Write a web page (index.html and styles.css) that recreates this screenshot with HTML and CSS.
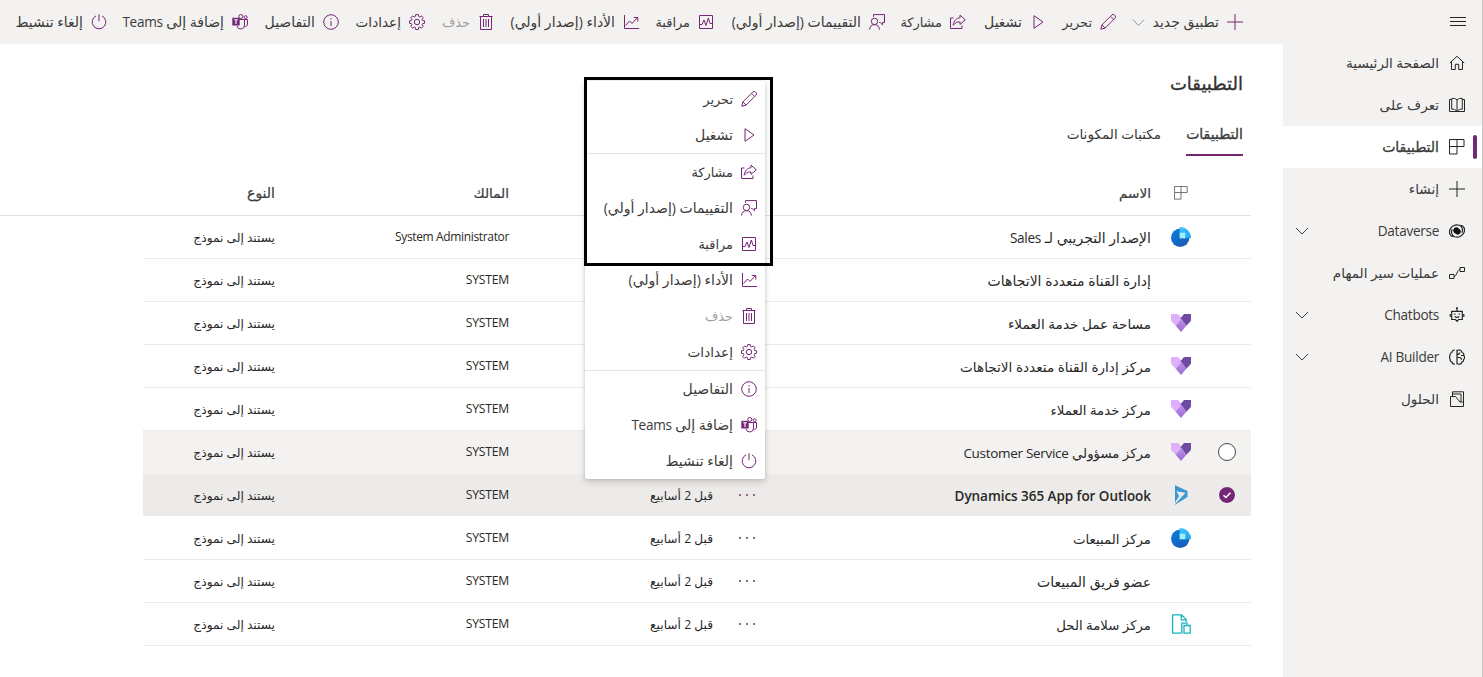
FILE: index.html
```html
<!DOCTYPE html>
<html lang="ar" dir="rtl">
<head>
<meta charset="utf-8">
<title>التطبيقات</title>
<link rel="stylesheet" href="styles.css">
</head>
<body>
<svg class="defs" aria-hidden="true">
  <defs>
    <linearGradient id="g-blue" x1="0" y1="0" x2=".6" y2="1"><stop offset="0" stop-color="#0a7fe0"/><stop offset="1" stop-color="#185db8"/></linearGradient>
    <linearGradient id="g-cyan" x1="0" y1="0" x2="1" y2="1"><stop offset="0" stop-color="#44c8f5"/><stop offset="1" stop-color="#1ba0f0"/></linearGradient>
    <linearGradient id="g-violet" x1="0" y1="0" x2="0" y2="1"><stop offset="0" stop-color="#bb92e6"/><stop offset="1" stop-color="#9a6ad2"/></linearGradient>
  </defs>
  <symbol id="plus" viewBox="0 0 16 16"><path d="M8 0v16M0 8h16"/></symbol>
  <symbol id="pencil" viewBox="0 0 16 16"><path d="M.8 15.2l1.100-4.300L11.700 1.100a1.900 1.900 0 0 1 2.800 0l.4.4a1.900 1.900 0 0 1 0 2.800L5.100 14.100zM10.500 2.300l3.200 3.200M1.900 10.900l3.200 3.200"/></symbol>
  <symbol id="play" viewBox="0 0 16 16"><path d="M4 1.700v12.600l9-6.300z"/></symbol>
  <symbol id="share" viewBox="0 0 16 16"><path d="M3.500 4H.5v10.500h11.500v-3M10 1.200l5.300 4.600L10 10.400V7.900C7 7.800 5 8.600 3.200 11.300 3.600 6.800 6.500 3.900 10 3.800z"/></symbol>
  <symbol id="feedback" viewBox="0 0 16 16"><path d="M4.500 2.800V.6h11v7.900h-2v2.300l-2.300-2.300h-1M.6 15.600c0-3 2-5 4.900-5s4.900 2 4.900 5"/><circle cx="5.500" cy="7.400" r="3.200"/></symbol>
  <symbol id="monitor" viewBox="0 0 16 16"><path d="M1.500 1.500h13v13h-13zM1.500 10.500H4l2-4.500 2 5.500 2.300-7.500 1.700 5.500h2.500"/></symbol>
  <symbol id="chart" viewBox="0 0 16 16"><path d="M1.500 1v13.500H16M2.500 11.500l4-4.500 2.500 2.500 5.500-6M10.800 3.500h4v4"/></symbol>
  <symbol id="trash" viewBox="0 0 16 16"><path d="M1.500 2.500h13M5.500 2.500v-2h5v2M2.500 2.500v13h11v-13M5.500 5v8M8 5v8M10.500 5v8"/></symbol>
  <symbol id="gear" viewBox="0 0 16 16"><circle cx="8" cy="8" r="2.700"/><path d="M6.700.6h2.600l.4 1.900 1 .5 1.700-1.100 1.800 1.800-1.100 1.700.4 1 2 .4v2.500l-2 .4-.4 1 1.100 1.700-1.800 1.800-1.700-1.100-1 .4-.4 2H6.700l-.4-2-1-.4-1.700 1.100-1.800-1.800 1.100-1.700-.4-1-2-.4V6.800l2-.4.4-1-1.100-1.700 1.800-1.800L5.300 3l1-.5z"/></symbol>
  <symbol id="info" viewBox="0 0 16 16"><circle cx="8" cy="8" r="7.300"/><path d="M8 7v5M8 4.200v1.300"/></symbol>
  <symbol id="teams" viewBox="0 0 16 16"><circle cx="8.800" cy="2.500" r="2"/><circle cx="13.600" cy="3.200" r="1.500"/><path d="M7 5.500h5.500v5.500a3.800 3.800 0 0 1-7.500 1M12.500 5.500h3v4.500a2.600 2.600 0 0 1-3 2.600"/><path class="solid" d="M.3 3.800h7.400v7.700H.3z"/><path class="cut" d="M2.200 5.700h3.600M4 5.700V10"/></symbol>
  <symbol id="power" viewBox="0 0 16 16"><path d="M8 .3v7M5 1.900a6.800 6.800 0 1 0 6 0"/></symbol>
  <symbol id="chevron" viewBox="0 0 16 16"><path d="M1 4.500L8 11.500l7-7"/></symbol>
  <symbol id="menu" viewBox="0 0 16 16"><path d="M0 4.500h16M0 8.500h16M0 12.500h16"/></symbol>
  <symbol id="home" viewBox="0 0 16 16"><path d="M.8 8L8 1.300 15.200 8M2.500 6.700v7.800h3.800V9.300h3.400v5.200h3.800V6.700"/></symbol>
  <symbol id="book" viewBox="0 0 16 16"><path d="M8 3v11.500M8 3C6.500 1.200 4.500 1.200 2.700 1.500v10.700c2-.2 4 .3 5.300 2.200 1.300-1.900 3.300-2.400 5.300-2.200V1.500C11.500 1.200 9.500 1.200 8 3M2.500 2.500h-2v12h15v-12h-2"/></symbol>
  <symbol id="apps" viewBox="0 0 16 16"><path d="M.5.500h14.500v7H.5zM.5 7.500v7.500h7.500V.5"/></symbol>
  <symbol id="dataverse" viewBox="0 0 16 16"><path stroke-width="1.200" d="M4.500 13.600C1 13.500-.3 10 1 6.500 2.500 2.800 6.800 1 10.300 2.300c3 1.200 4 4.600 2.500 7.500M11.500 2.400c3.500.1 4.800 3.600 3.500 7.100-1.500 3.700-5.800 5.500-9.300 4.200-3-1.200-4-4.600-2.500-7.500"/><ellipse class="solid" cx="8" cy="8" rx="3.900" ry="3.200" transform="rotate(35 8 8)"/></symbol>
  <symbol id="flow" viewBox="0 0 16 16"><path d="M.5 9.500h4.500v4H.5zM11 2.500h4.500v4H11zM5 11.500c3 0 3-7 6-7"/></symbol>
  <symbol id="bot" viewBox="0 0 16 16"><path stroke-width="1.200" d="M2.700 4.300h10.600v8.200H9.500L8 14.300l-1.500-1.800H2.700zM8 4.300V1.500M1.200 7v3M14.800 7v3M5.700 9.500c1.200 1.200 3.400 1.200 4.600 0"/><path class="solid" d="M5.200 6.500h1.200v1.200H5.200zM9.600 6.500h1.200v1.200H9.600zM7.200.3h1.600v1.600H7.200z"/></symbol>
  <symbol id="brain" viewBox="0 0 16 16"><path stroke-width="1.200" d="M5.800 1C4.300.9 3.200 1.700 3 3.200 1.500 3.800.8 5.200 1.100 6.500c-.8 1-.8 2.300 0 3.400-.3 1.500.4 2.600 1.800 3.100.3 1.400 1.400 2.200 2.900 2M8 .8v14.400M8 1.800c1.700-1.500 4.500-.8 4.900 1.400 1.500.6 2.200 1.900 1.800 3.200 1.100 1.200 1.100 2.800 0 3.900.2 1.500-.6 2.400-1.800 2.800-.4 2.200-3.200 2.900-4.900 1.200M8 5.500c1.800 0 2.600-.7 2.600-2M8 8.500h2.500c1.500 0 2 1 2 2.200M12 6.500l2.500 0"/></symbol>
  <symbol id="solutions" viewBox="0 0 16 16"><path d="M1.500 5.500v10h13v-4.500h-3.500L6.500 5.500zM3.500 5.500v-2.500h8.500v8M3.500 3V.8h11v10.200"/></symbol>
  <symbol id="app-sales" viewBox="0 0 20 20"><circle cx="9.200" cy="10.800" r="9.200" fill="url(#g-blue)"/><path d="M8.700 0A11.300 11.300 0 0 1 20 11.300H8.700z" fill="url(#g-cyan)"/><path d="M8.700 5.700h5.600v5.600H8.700z" fill="#9feef4"/></symbol>
  <symbol id="app-service" viewBox="0 0 20 20"><path d="M0 1h7l4.500 4.800L5 13 1 9Q0 8 0 6.500z" fill="#deb0fb"/><path d="M9.500 5.300L13 1h7v5.500q0 1.500-1 2.500L15 13z" fill="#6d4ba3"/><path d="M4.700 12.800L10.500 6 15.500 12.600 10 19z" fill="url(#g-violet)"/></symbol>
  <symbol id="app-dynamics" viewBox="0 0 20 20"><path d="M4 .2L16.500 6v6L4 19.800z" fill="#3b97d3"/><path d="M5.300 6.300l9.200 1.500L4 19.200V17l4.300-6z" fill="#ecebe9"/><path d="M6.800 7.800l5.200 1.500-3.200 4.500z" fill="#ecebe9"/><path d="M4 12l3.500-1.500L4 18z" fill="#3b97d3"/></symbol>
  <symbol id="app-health" viewBox="0 0 20 20"><path d="M10 19.200H1.600V.8h9l4.600 4.600V8M10.300.8v5h5M13 11.500h6.200v7.700H13zM10.800 19.500V9.200H16v2" fill="none" stroke="#13b5bf" stroke-width="1.300"/></symbol>
</svg>

<div class="shell">
  <nav class="sidebar">
    <div class="nav-toggle"><svg class="icon"><use href="#menu"/></svg></div>
    <a class="nav-item"><svg class="icon"><use href="#home"/></svg><span class="snug">الصفحة الرئيسية</span></a>
    <a class="nav-item"><svg class="icon"><use href="#book"/></svg><span class="snug">تعرف على</span></a>
    <a class="nav-item selected"><svg class="icon"><use href="#apps"/></svg><span class="semi">التطبيقات</span></a>
    <a class="nav-item"><svg class="icon"><use href="#plus"/></svg><span class="snug">إنشاء</span></a>
    <a class="nav-item"><svg class="icon"><use href="#dataverse"/></svg><span class="latin">Dataverse</span><svg class="icon expand"><use href="#chevron"/></svg></a>
    <a class="nav-item"><svg class="icon"><use href="#flow"/></svg><span class="snug">عمليات سير المهام</span></a>
    <a class="nav-item"><svg class="icon"><use href="#bot"/></svg><span class="latin">Chatbots</span><svg class="icon expand"><use href="#chevron"/></svg></a>
    <a class="nav-item"><svg class="icon"><use href="#brain"/></svg><span class="latin">AI Builder</span><svg class="icon expand"><use href="#chevron"/></svg></a>
    <a class="nav-item"><svg class="icon"><use href="#solutions"/></svg><span class="snug">الحلول</span></a>
  </nav>

  <div class="main">
    <div class="commands">
      <button class="cmd cmd-new"><svg class="icon"><use href="#plus"/></svg><span>تطبيق جديد</span><svg class="icon caret"><use href="#chevron"/></svg></button>
      <button class="cmd cmd-edit"><svg class="icon"><use href="#pencil"/></svg><span class="tight">تحرير</span></button>
      <button class="cmd cmd-play"><svg class="icon"><use href="#play"/></svg><span>تشغيل</span></button>
      <button class="cmd cmd-share"><svg class="icon"><use href="#share"/></svg><span class="tight">مشاركة</span></button>
      <button class="cmd cmd-ratings"><svg class="icon"><use href="#feedback"/></svg><span>التقييمات (إصدار أولي)</span></button>
      <button class="cmd cmd-monitor"><svg class="icon"><use href="#monitor"/></svg><span class="tight">مراقبة</span></button>
      <button class="cmd cmd-perf"><svg class="icon"><use href="#chart"/></svg><span>الأداء (إصدار أولي)</span></button>
      <button class="cmd cmd-delete disabled"><svg class="icon"><use href="#trash"/></svg><span class="tight">حذف</span></button>
      <button class="cmd cmd-settings"><svg class="icon"><use href="#gear"/></svg><span class="snug">إعدادات</span></button>
      <button class="cmd cmd-details"><svg class="icon"><use href="#info"/></svg><span>التفاصيل</span></button>
      <button class="cmd cmd-teams"><svg class="icon"><use href="#teams"/></svg><span>إضافة إلى <bdi class="latin">Teams</bdi></span></button>
      <button class="cmd"><svg class="icon"><use href="#power"/></svg><span>إلغاء تنشيط</span></button>
    </div>

    <h1 class="title">التطبيقات</h1>
    <div class="tabs">
      <a class="tab active">التطبيقات</a>
      <a class="tab snug">مكتبات المكونات</a>
    </div>

    <div class="table">
      <div class="row head">
        <span></span><span class="app"><svg class="icon type"><use href="#apps"/></svg></span><span class="snug">الاسم</span><span></span><span></span><span class="snug">المالك</span><span>النوع</span>
      </div>
      <div class="rows">
        <div class="row"><span></span><span class="app"><svg><use href="#app-sales"/></svg></span><span class="name">الإصدار التجريبي لـ <bdi class="latin">Sales</bdi></span><span></span><span></span><span class="owner admin">System Administrator</span><span class="kind">يستند إلى نموذج</span></div>
        <div class="row"><span></span><span></span><span class="name">إدارة القناة متعددة الاتجاهات</span><span></span><span></span><span class="owner">SYSTEM</span><span class="kind">يستند إلى نموذج</span></div>
        <div class="row"><span></span><span class="app"><svg><use href="#app-service"/></svg></span><span class="name snug">مساحة عمل خدمة العملاء</span><span></span><span></span><span class="owner">SYSTEM</span><span class="kind">يستند إلى نموذج</span></div>
        <div class="row"><span></span><span class="app"><svg><use href="#app-service"/></svg></span><span class="name snug">مركز إدارة القناة متعددة الاتجاهات</span><span></span><span></span><span class="owner">SYSTEM</span><span class="kind">يستند إلى نموذج</span></div>
        <div class="row"><span></span><span class="app"><svg><use href="#app-service"/></svg></span><span class="name hub">مركز خدمة العملاء</span><span></span><span></span><span class="owner">SYSTEM</span><span class="kind">يستند إلى نموذج</span></div>
        <div class="row hover"><span class="check"><i class="radio"></i></span><span class="app"><svg><use href="#app-service"/></svg></span><span class="name hub">مركز مسؤولي <bdi class="latin">Customer Service</bdi></span><span></span><span></span><span class="owner">SYSTEM</span><span class="kind">يستند إلى نموذج</span></div>
        <div class="row picked"><span class="check"><i class="radio on"><svg viewBox="0 0 10 10"><path d="M1.500 5.200l2.400 2.300 4.600-4.800"/></svg></i></span><span class="app"><svg><use href="#app-dynamics"/></svg></span><span class="name strong">Dynamics 365 App for Outlook</span><span class="more"><i></i><i></i><i></i></span><span class="date">قبل 2 أسابيع</span><span class="owner">SYSTEM</span><span class="kind">يستند إلى نموذج</span></div>
        <div class="row"><span></span><span class="app"><svg><use href="#app-sales"/></svg></span><span class="name hub">مركز المبيعات</span><span class="more"><i></i><i></i><i></i></span><span class="date">قبل 2 أسابيع</span><span class="owner">SYSTEM</span><span class="kind">يستند إلى نموذج</span></div>
        <div class="row"><span></span><span></span><span class="name">عضو فريق المبيعات</span><span class="more"><i></i><i></i><i></i></span><span class="date">قبل 2 أسابيع</span><span class="owner">SYSTEM</span><span class="kind">يستند إلى نموذج</span></div>
        <div class="row"><span></span><span class="app"><svg><use href="#app-health"/></svg></span><span class="name hub">مركز سلامة الحل</span><span class="more"><i></i><i></i><i></i></span><span class="date">قبل 2 أسابيع</span><span class="owner">SYSTEM</span><span class="kind">يستند إلى نموذج</span></div>
      </div>
    </div>
  </div>
</div>

<div class="context-menu">
  <a class="entry"><svg class="icon"><use href="#pencil"/></svg><span class="tight">تحرير</span></a>
  <a class="entry"><svg class="icon"><use href="#play"/></svg><span>تشغيل</span></a>
  <hr>
  <a class="entry"><svg class="icon"><use href="#share"/></svg><span class="tight">مشاركة</span></a>
  <a class="entry"><svg class="icon"><use href="#feedback"/></svg><span>التقييمات (إصدار أولي)</span></a>
  <a class="entry"><svg class="icon"><use href="#monitor"/></svg><span class="tight">مراقبة</span></a>
  <a class="entry"><svg class="icon"><use href="#chart"/></svg><span>الأداء (إصدار أولي)</span></a>
  <a class="entry disabled"><svg class="icon"><use href="#trash"/></svg><span class="tight">حذف</span></a>
  <a class="entry"><svg class="icon"><use href="#gear"/></svg><span class="snug">إعدادات</span></a>
  <hr>
  <a class="entry"><svg class="icon"><use href="#info"/></svg><span>التفاصيل</span></a>
  <a class="entry"><svg class="icon"><use href="#teams"/></svg><span>إضافة إلى <bdi class="latin">Teams</bdi></span></a>
  <a class="entry"><svg class="icon"><use href="#power"/></svg><span>إلغاء تنشيط</span></a>
</div>
<div class="highlight-frame"></div>
</body>
</html>
```
FILE: styles.css
```css
* { box-sizing: border-box; }

body {
  margin: 0;
  height: 677px;
  overflow: hidden;
  background: #fff;
  color: #3b3a39;
  font: 14px/20px "Open Sans", "DejaVu Sans", sans-serif;
  white-space: nowrap;
}

.defs { position: absolute; width: 0; height: 0; }

.icon {
  flex: none;
  width: 16px;
  height: 16px;
  overflow: visible;
  fill: none;
  stroke: #742774;
  stroke-width: 1;
}
.solid { fill: currentColor; stroke: none; }
.cut { stroke: #fff; stroke-width: 1.1; }
.cmd .icon, .entry .icon { color: #742774; }

.latin { font-size: 13.6px; letter-spacing: -.3px; }
.snug { font-size: 13.6px; }
.tight { font-size: 12.9px; }

.shell { display: flex; height: 677px; }

/* Side navigation */
.sidebar {
  flex: none;
  width: 200px;
  background: #f3f2f1;
  border-right: 1px solid #c8c6c4;
}
.sidebar .icon { stroke: #252423; color: #111; }
.nav-toggle {
  display: flex;
  align-items: center;
  height: 42px;
  padding-inline-start: 16px;
}
.nav-item {
  display: flex;
  align-items: center;
  height: 42px;
  padding: 0 17px 0 12px;
  gap: 10px;
}
.nav-item.selected {
  position: relative;
  background: #fff;
}
.nav-item.selected::before {
  content: "";
  position: absolute;
  right: 5px;
  top: 9px;
  width: 4px;
  height: 24px;
  border-radius: 2px;
  background: #742774;
}
.semi { -webkit-text-stroke: .3px currentColor; }
.expand { width: 14px; height: 14px; margin-inline-start: auto; }

/* Command bar */
.main { flex: 1; min-width: 0; }
.commands {
  display: flex;
  height: 44px;
  padding-inline-start: 40px;
  background: #f3f2f1;
}
.cmd {
  flex: none;
  display: flex;
  align-items: center;
  gap: 8px;
  padding: 0;
  border: 0;
  background: none;
  color: inherit;
  font: inherit;
}
.caret { width: 13px; height: 13px; }
.cmd .caret { stroke: #5f8d9a; }
.cmd-new { width: 127px; }
.cmd-edit { width: 70px; }
.cmd-play { width: 80px; }
.cmd-share { width: 81px; }
.cmd-ratings { width: 171px; }
.cmd-monitor { width: 75px; }
.cmd-perf { width: 145px; }
.cmd-delete { width: 69px; }
.cmd-settings { width: 86px; }
.cmd-details { width: 91px; }
.cmd-teams { width: 141px; }
.disabled span { color: #a19f9d; }

/* Page heading and tabs */
.title {
  margin: 27px 40px 0 0;
  font-size: 18px;
  line-height: 24px;
  font-weight: 400;
  color: #323130;
  -webkit-text-stroke: .35px currentColor;
}
.tabs {
  display: flex;
  gap: 25px;
  margin: 17px 40px 0 0;
}
.tab {
  height: 44px;
  line-height: 44px;
  border-bottom: 2px solid transparent;
}
.tab.active {
  border-bottom-color: #742774;
  -webkit-text-stroke: .3px currentColor;
}

/* Application list */
.table { margin: 15px 32px 0 0; }
.row {
  display: grid;
  grid-template-columns: 48px 52px 394px 44px 204px 234px 1fr;
  align-items: center;
  height: 43px;
  border-bottom: 1px solid #edebe9;
}
.head {
  height: 45px;
  border-bottom-color: #e3e2e0;
  -webkit-text-stroke: .2px currentColor;
}
.rows { margin-left: 143px; color: #292827; }
.row.hover { background: #f3f2f1; border-color: #f3f2f1; }
.row.picked { background: #ecebe9; border-color: #fff; }
.app { display: flex; padding-inline-start: 12px; }
.app svg { width: 20px; height: 20px; }
.app .type { width: 14px; height: 14px; margin-inline-start: 3px; stroke: #605e5c; }
.check { display: flex; justify-content: center; }
.radio {
  display: grid;
  place-items: center;
  width: 18px;
  height: 18px;
  border: 1px solid #484644;
  border-radius: 50%;
  background: #fff;
}
.radio.on { border-color: #fff; background: #742774; }
.radio svg { width: 10px; height: 10px; fill: none; stroke: #fff; stroke-width: 1.5; }
.name { padding-top: 2px; }
.hub { font-size: 13.3px; }
.hub .latin { font-size: 13.5px; }
.strong { font-size: 13.5px; font-weight: 600; letter-spacing: -.05px; }
.date, .kind { padding-top: 2px; font-size: 12.2px; }
.owner { font-size: 12.2px; letter-spacing: -.25px; }
.admin { font-size: 12px; letter-spacing: -.35px; }
.more { display: flex; gap: 5px; padding-right: 2px; }
.more i { width: 2px; height: 2px; background: #8e6b8e; }

/* Row context menu */
.context-menu {
  position: absolute;
  left: 585px;
  top: 81px;
  width: 180px;
  height: 398px;
  background: #fff;
  border-radius: 2px;
  box-shadow: 0 3px 7px rgba(0, 0, 0, .16), 0 0 3px rgba(0, 0, 0, .14);
}
.entry {
  display: flex;
  align-items: center;
  gap: 8px;
  height: 36px;
  padding: 0 8px;
}
.context-menu hr { margin: 0; border: 0; height: 1px; background: #e5e4e3; }

.highlight-frame {
  position: absolute;
  left: 584px;
  top: 77px;
  width: 189px;
  height: 189px;
  border: 3px solid #000;
}
```
